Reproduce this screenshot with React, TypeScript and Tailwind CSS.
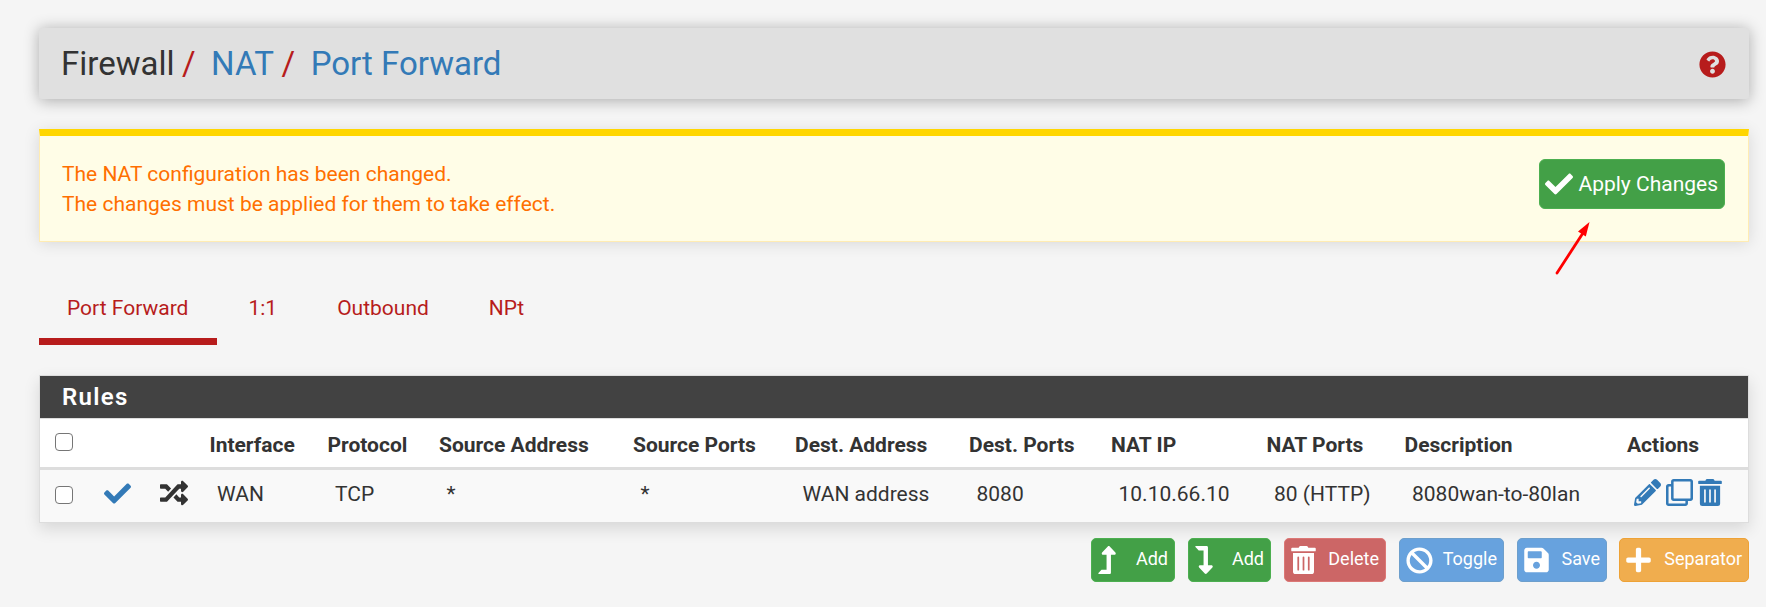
import type { ReactNode } from 'react';
import {
  FaBan,
  FaCheck,
  FaLevelDownAlt,
  FaLevelUpAlt,
  FaPencilAlt,
  FaPlus,
  FaQuestionCircle,
  FaRandom,
  FaRegClone,
  FaSave,
  FaTrashAlt,
} from 'react-icons/fa';

const columns = [
  { title: 'Interface', value: 'WAN' },
  { title: 'Protocol', value: 'TCP' },
  { title: 'Source Address', value: '*' },
  { title: 'Source Ports', value: '*' },
  { title: 'Dest. Address', value: 'WAN address' },
  { title: 'Dest. Ports', value: '8080' },
  { title: 'NAT IP', value: '10.10.66.10' },
  { title: 'NAT Ports', value: '80 (HTTP)' },
  { title: 'Description', value: '8080wan-to-80lan' },
];

const gridColumns =
  'grid grid-cols-[56px_56px_50px_118px_111.500px_194px_162px_174px_142px_155.500px_138px_222px_1fr]';

function Checkbox() {
  return (
    <input
      type="checkbox"
      className="block size-[18px] appearance-none rounded-[4px] border-[1.5px] border-[#767676] bg-white"
    />
  );
}

function ActionButton({ className, icon, label }: { className: string; icon: ReactNode; label: string }) {
  return (
    <button
      className={`flex h-11 items-center justify-between rounded-[5px] border pr-[6px] pl-[6px] text-[18px] leading-[27px] text-white ${className}`}
    >
      {icon}
      <span className="pb-[3px]">{label}</span>
    </button>
  );
}

export default function App() {
  return (
    <div className="h-[607px] w-[1766px] overflow-hidden bg-[#f5f5f5] pt-7 pr-[17px] pl-[39px] font-['Roboto',sans-serif] text-[21px] leading-[30px] text-[#333]">
      <header className="flex h-[71px] items-center justify-between rounded-[3px] bg-[#e0e0e0] pr-[23px] pl-[22px] shadow-[0_1.5px_15px_rgba(0,0,0,0.3)]">
        <h1 className="flex pt-px text-[33px] leading-[36px]">
          <span>Firewall</span>
          <span className="ml-[7.5px] text-[#b71c1c]">/</span>
          <a className="ml-[15.5px] text-[#337ab7]">NAT</a>
          <span className="ml-[7.5px] text-[#b71c1c]">/</span>
          <a className="ml-[15.5px] text-[#337ab7]">Port Forward</a>
        </h1>
        <FaQuestionCircle className="mt-[2px] size-[27px] text-[#b71c1c]" />
      </header>

      <section className="relative mt-[30px] flex h-[113px] items-start justify-between border border-t-[7px] border-[#ffecb3] border-t-[#ffd600] bg-[#fffde7] pr-[23px] pl-[22px] shadow-[0_1.5px_15px_rgba(0,0,0,0.12)]">
        <p className="pt-[23px] text-[#ff6f00]">
          The NAT configuration has been changed.
          <br />
          The changes must be applied for them to take effect.
        </p>
        <button className="mt-[23px] flex h-[50px] w-[186px] items-center justify-between rounded-[6px] border border-[#4caf50] bg-[#43a047] pr-[6px] pl-[5px] text-white">
          <FaCheck className="size-[28px]" />
          <span>Apply Changes</span>
        </button>
        <svg className="absolute top-[85px] left-[1513px] h-[56px] w-[42px]" viewBox="0 0 42 56">
          <path d="M4 52 30 12" stroke="#f00" strokeWidth="2.8" strokeLinecap="round" />
          <path d="M36.500 1 25 10.500 32.800 15.500Z" fill="#f00" />
        </svg>
      </section>

      <nav className="mt-[36px] flex h-[67px] gap-[3px] text-[#b71c1c]">
        <a className="border-b-[7px] border-[#b71c1c] pt-[15px] pr-[29px] pl-[28px]">Port Forward</a>
        <a className="pt-[15px] pr-[29px] pl-[28px]">1:1</a>
        <a className="pt-[15px] pr-[29px] pl-[28px]">Outbound</a>
        <a className="pt-[15px] pr-[29px] pl-[28px]">NPt</a>
      </nav>

      <section className="mt-[30px] border border-[#ddd] bg-white shadow-[0_6px_15px_rgba(0,0,0,0.12)]">
        <h2 className="h-[42px] bg-[#424242] pl-[22px] text-[24px] leading-[42px] font-semibold tracking-[1.3px] text-white">
          Rules
        </h2>
        <div className={`${gridColumns} h-[52px] border-t border-b-[3px] border-[#ddd] font-bold`}>
          <div className="pt-[14px] pl-[15px]">
            <Checkbox />
          </div>
          <div />
          <div />
          {columns.map((c) => (
            <div key={c.title} className="pt-[11px] pl-[7.5px] whitespace-nowrap">
              {c.title}
            </div>
          ))}
          <div className="pt-[11px] pl-[8px]">Actions</div>
        </div>
        <div className={`${gridColumns} h-[52px] bg-[#f9f9f9]`}>
          <div className="pt-[16px] pl-[15px]">
            <Checkbox />
          </div>
          <div className="pt-[9.5px] pl-[8px]">
            <FaCheck className="size-[27px] text-[#337ab7]" />
          </div>
          <div className="pt-[9px] pl-[8px]">
            <FaRandom className="size-[28px]" />
          </div>
          {columns.map((c) => (
            <div key={c.title} className="pt-[9px] pl-[15px] whitespace-nowrap">
              {c.value}
            </div>
          ))}
          <div className="flex gap-[5px] pt-[9px] pl-[15px] text-[#337ab7]">
            <FaPencilAlt className="size-[27px]" />
            <FaRegClone className="size-[27px]" />
            <FaTrashAlt className="h-[27px] w-[24px]" />
          </div>
        </div>
      </section>

      <div className="mt-[15px] flex justify-end">
        <ActionButton
          className="w-[84px] border-[#4caf50] bg-[#43a047]"
          icon={<FaLevelUpAlt className="h-[28px] w-[18px]" />}
          label="Add"
        />
        <ActionButton
          className="ml-[13px] w-[83px] border-[#4caf50] bg-[#43a047]"
          icon={<FaLevelDownAlt className="h-[28px] w-[18px]" />}
          label="Add"
        />
        <ActionButton
          className="ml-[13px] w-[102px] border-[#dc7876] bg-[#cc6666]"
          icon={<FaTrashAlt className="h-[28px] w-[25px]" />}
          label="Delete"
        />
        <ActionButton
          className="ml-[13px] w-[105px] border-[#6d9fcc] bg-[#67a2de]"
          icon={<FaBan className="size-[27px]" />}
          label="Toggle"
        />
        <ActionButton
          className="ml-[13px] w-[90px] border-[#6d9fcc] bg-[#67a2de]"
          icon={<FaSave className="h-[28px] w-[25px]" />}
          label="Save"
        />
        <ActionButton
          className="ml-[12px] w-[130px] border-[#eea236] bg-[#f0ad4e]"
          icon={<FaPlus className="h-[28px] w-[25px]" />}
          label="Separator"
        />
      </div>
    </div>
  );
}
